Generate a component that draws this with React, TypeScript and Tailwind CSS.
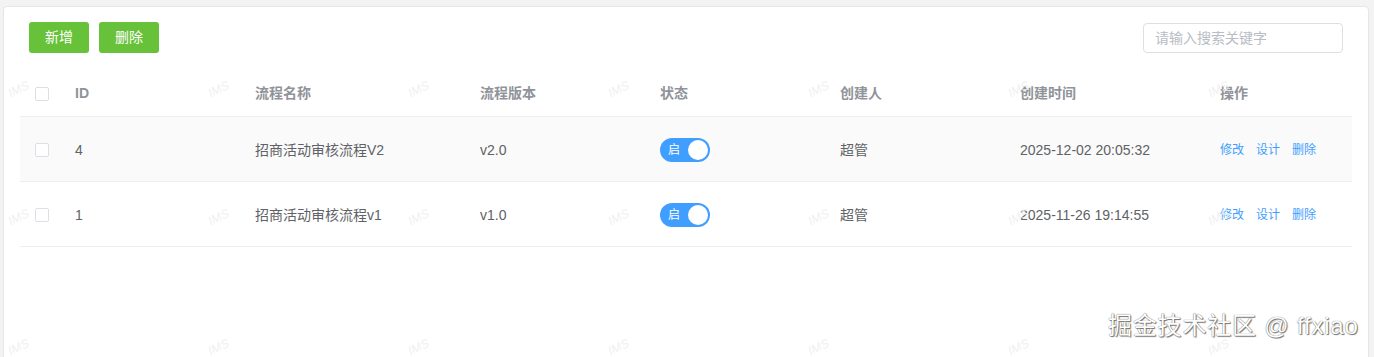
const rows = [
  { id: 4, name: "招商活动审核流程V2", version: "v2.0", creator: "超管", time: "2025-12-02 20:05:32", hover: true },
  { id: 1, name: "招商活动审核流程v1", version: "v1.0", creator: "超管", time: "2025-11-26 19:14:55", hover: false },
]

const cols = "grid grid-cols-[55px_180px_225px_180px_180px_180px_200px_1fr] items-center"

function Checkbox() {
  return <span className="ml-[15px] block w-[14px] h-[14px] rounded-[2px] border border-[#dcdfe6] bg-white" />
}

function Switch() {
  return (
    <span className="flex items-center w-[50px] h-[24px] rounded-full bg-[#409eff] pl-[8px] pr-[2px]">
      <span className="text-[12px] text-white leading-none">启</span>
      <span className="ml-auto w-[20px] h-[20px] rounded-full bg-white" />
    </span>
  )
}

function Watermarks() {
  const xs = [8, 208, 408, 608, 808, 1008, 1208]
  const ys = [80, 208, 338]
  return (
    <div className="pointer-events-none absolute inset-0 overflow-hidden">
      {ys.map((y) =>
        xs.map((x) => (
          <span
            key={`${x}-${y}`}
            className="absolute text-[12px] text-[#f0f0f0] -rotate-[25deg] skew-x-[-10deg]"
            style={{ left: x, top: y }}
          >
            IMS
          </span>
        ))
      )}
      {/* site watermark */}
      <span className="absolute left-[1108px] top-[314px] text-[24px] text-white leading-none tracking-[0.8px] [text-shadow:0_0_1px_#444,1px_1px_1px_#777]">
        掘金技术社区 @ ffxiao
      </span>
    </div>
  )
}

export default function App() {
  return (
    <div
      className="relative h-[357px] overflow-hidden bg-[#f3f3f3] pt-[6px] pl-[3px] pr-[5px]"
      style={{ fontFamily: '"Liberation Sans", "Noto Sans CJK SC", sans-serif' }}
    >
      <div className="min-h-[400px] bg-white border border-[#e6e6e6] rounded-[4px] pt-[15px] px-[16px]">
        {/* Toolbar */}
        <div className="flex items-center px-[9px]">
          <button className="w-[60px] h-[31px] rounded-[3px] bg-[#67c23a] text-white text-[14px]">新增</button>
          <button className="ml-[10px] w-[60px] h-[31px] rounded-[3px] bg-[#67c23a] text-white text-[14px]">删除</button>
          <input
            placeholder="请输入搜索关键字"
            className="ml-auto w-[200px] h-[30px] rounded-[4px] border border-[#dcdfe6] px-[11px] text-[14px] placeholder:text-[#b8bcc4] outline-none"
          />
        </div>

        {/* Table */}
        <div className="mt-[18px]">
          <div className={`${cols} h-[46px] border-b border-[#ebeef5] text-[14px] font-bold text-[#909399]`}>
            <Checkbox />
            <span>ID</span>
            <span>流程名称</span>
            <span>流程版本</span>
            <span>状态</span>
            <span>创建人</span>
            <span>创建时间</span>
            <span>操作</span>
          </div>
          {rows.map((r) => (
            <div
              key={r.id}
              className={`${cols} h-[65px] pt-[2px] border-b border-[#ebeef5] text-[14px] text-[#606266] ${r.hover ? "bg-[#fafafa]" : "bg-white"}`}
            >
              <Checkbox />
              <span>{r.id}</span>
              <span>{r.name}</span>
              <span>{r.version}</span>
              <span>
                <Switch />
              </span>
              <span>{r.creator}</span>
              <span>{r.time}</span>
              <span className="flex gap-[12px] text-[12px] text-[#409eff]">
                <a>修改</a>
                <a>设计</a>
                <a>删除</a>
              </span>
            </div>
          ))}
        </div>
      </div>
      <Watermarks />
    </div>
  )
}
